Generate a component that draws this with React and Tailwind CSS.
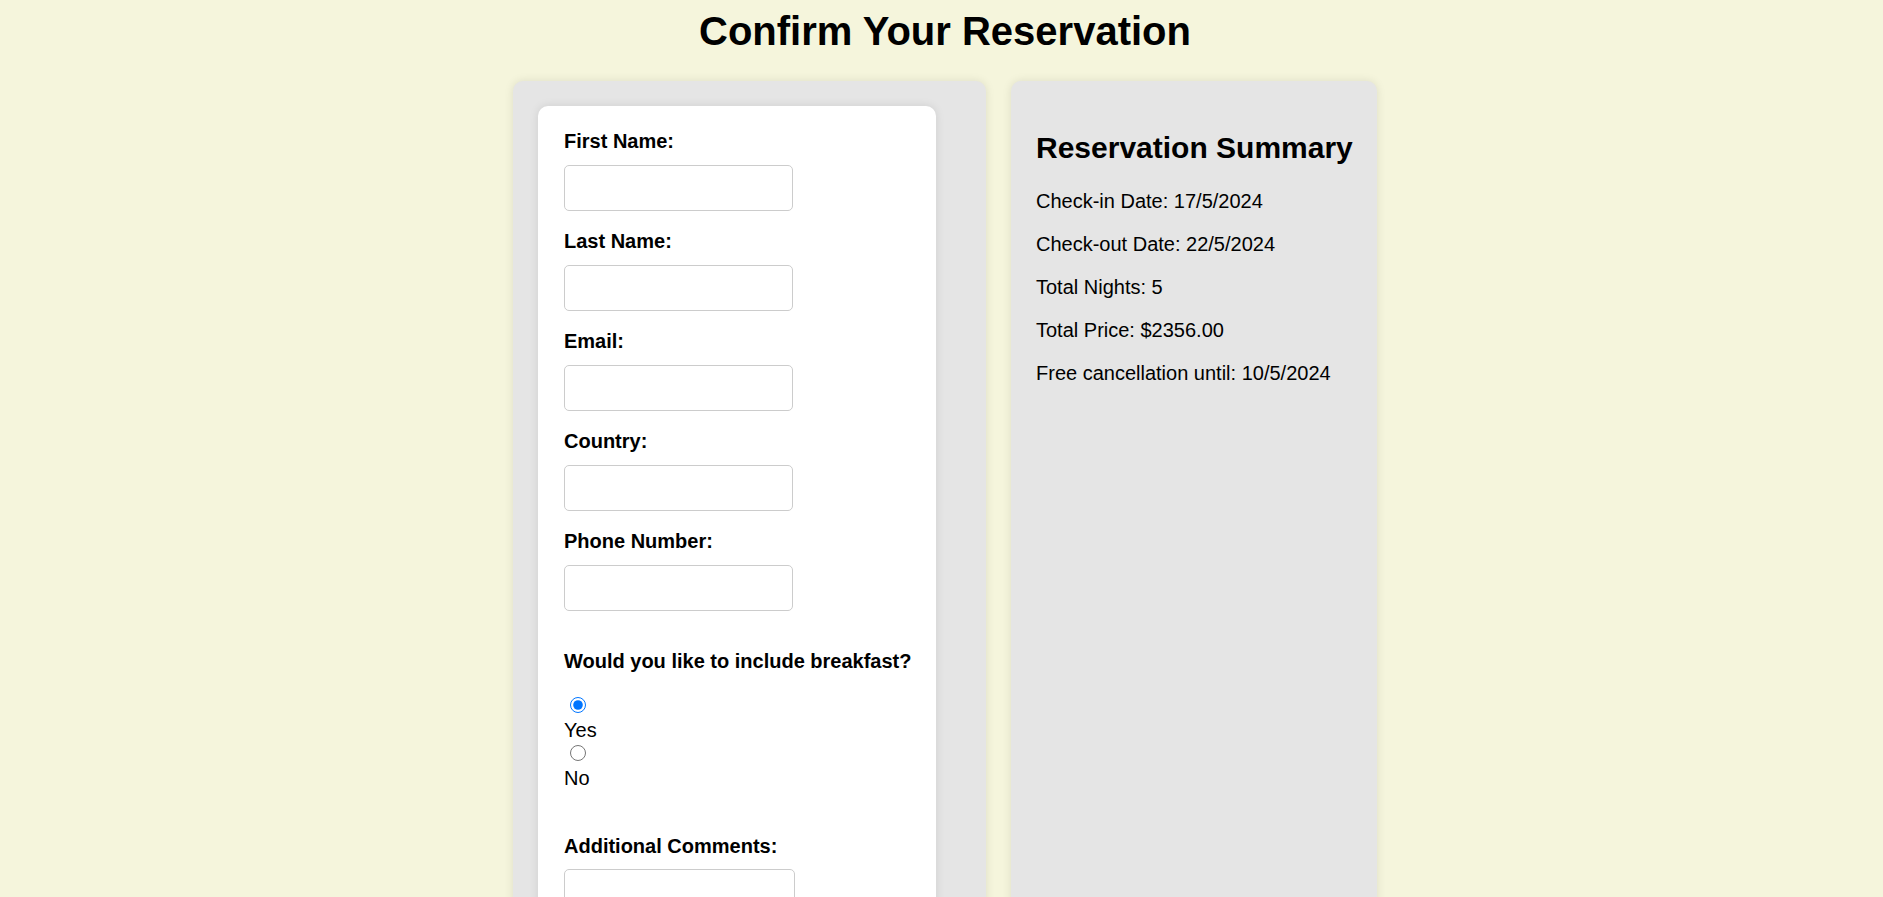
import React from 'react';

const fields = ['First Name:', 'Last Name:', 'Email:', 'Country:', 'Phone Number:'];

const summary = [
  'Check-in Date: 17/5/2024',
  'Check-out Date: 22/5/2024',
  'Total Nights: 5',
  'Total Price: $2356.00',
  'Free cancellation until: 10/5/2024',
];

const App = () => {
  return (
    <div className="min-h-screen bg-[#f5f5dc] pl-[7px] pb-[40px] text-black font-['Liberation_Sans',Arial,sans-serif]">
      <h1 className="pt-[8px] text-center text-[40px] font-bold leading-[46px]">Confirm Your Reservation</h1>

      <div className="mt-[27px] flex justify-center gap-[25px]">
        {/* Form panel */}
        <div className="w-[473px] rounded-[10px] bg-[#e5e5e5] p-[25px] shadow-[0_0_10px_rgba(0,0,0,0.1)]">
          <form className="w-[398px] rounded-[10px] bg-white px-[26px] pt-[24px] pb-[26px] shadow-[0_0_10px_rgba(0,0,0,0.1)]">
            {fields.map((f) => (
              <div key={f}>
                <label className="mb-[12px] block text-[20px] font-bold leading-[23px]">{f}</label>
                <input
                  type="text"
                  className="mb-[19px] block h-[46px] w-[229px] rounded-[5px] border border-[#ccc] bg-white px-[10px] text-[20px] outline-none"
                />
              </div>
            ))}

            <div className="pt-[20px]">
              <p className="whitespace-nowrap text-[20px] font-bold leading-[23px]">Would you like to include breakfast?</p>
              <input
                type="radio"
                name="breakfast"
                defaultChecked
                className="mt-[24px] mb-[6px] ml-[6px] block h-[16px] w-[16px]"
              />
              <label className="block text-[20px] leading-[23px]">Yes</label>
              <input
                type="radio"
                name="breakfast"
                className="mt-[3px] mb-[6px] ml-[6px] block h-[16px] w-[16px]"
              />
              <label className="block text-[20px] leading-[23px]">No</label>
            </div>

            <label className="mt-[45px] mb-[11px] block text-[20px] font-bold leading-[23px]">Additional Comments:</label>
            <textarea className="block h-[90px] w-[231px] resize-none rounded-[5px] border border-[#ccc] p-[10px] text-[20px] outline-none" />

            <button
              type="button"
              className="mt-[25px] rounded-[5px] bg-[#4caf50] px-[25px] py-[12px] text-[20px] text-white"
            >
              Confirm Reservation
            </button>
          </form>
        </div>

        {/* Summary panel */}
        <div className="w-[366px] rounded-[10px] bg-[#e5e5e5] px-[25px] shadow-[0_0_10px_rgba(0,0,0,0.1)]">
          <h2 className="mt-[49px] mb-[25px] whitespace-nowrap text-[30px] font-bold leading-[35px]">Reservation Summary</h2>
          {summary.map((s) => (
            <p key={s} className="mb-[20px] text-[20px] leading-[23px]">{s}</p>
          ))}
        </div>
      </div>
    </div>
  );
};

export default App;
